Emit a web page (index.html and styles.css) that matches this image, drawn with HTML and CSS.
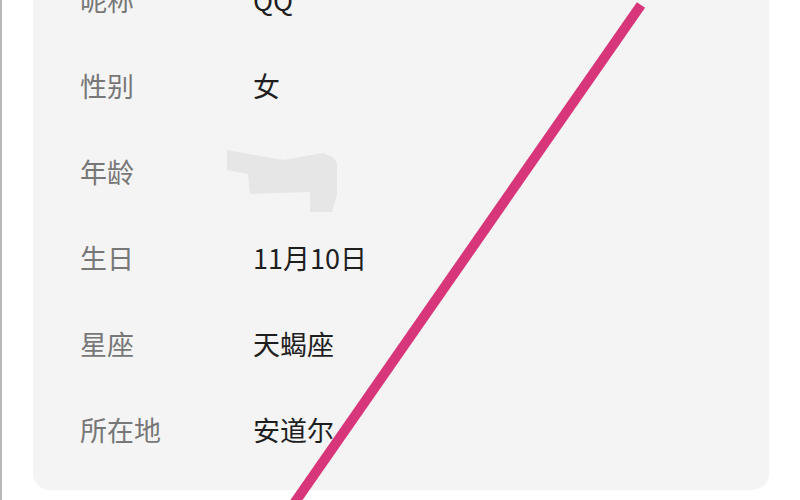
FILE: index.html
```html
<!DOCTYPE html>
<html lang="zh">
<head>
<meta charset="utf-8">
<link rel="stylesheet" href="styles.css">
</head>
<body>
<div class="page">
  <div class="card">
    <div class="row"><span class="label">昵称</span><span class="value">QQ</span></div>
    <div class="row"><span class="label">性别</span><span class="value">女</span></div>
    <div class="row"><span class="label">年龄</span><span class="value"></span></div>
    <div class="row"><span class="label">生日</span><span class="value">11月10日</span></div>
    <div class="row"><span class="label">星座</span><span class="value">天蝎座</span></div>
    <div class="row"><span class="label">所在地</span><span class="value">安道尔</span></div>
  </div>
  <svg class="overlay" width="800" height="500" viewBox="0 0 800 500">
    <polygon class="blob" points="227,150 283,160 323,153 333,157 337,163 337,195 332,212 310,212 310,192 250,194 248,174 227,170"/>
    <line class="strike" x1="641" y1="5" x2="293" y2="505"/>
  </svg>
</div>
</body>
</html>
```
FILE: styles.css
```css
html, body {
  margin: 0;
  padding: 0;
  background: #ffffff;
  overflow: hidden;
}
.page {
  position: relative;
  display: flow-root;
  width: 800px;
  height: 500px;
  box-sizing: border-box;
  box-shadow: inset 2px 0 0 #b8b8b8;
  padding-left: 33px;
  padding-right: 31px;
  font-family: "Noto Sans CJK SC", "Noto Sans", sans-serif;
}
.card {
  margin-top: -44px;
  background: #f4f4f4;
  border-radius: 0 0 16px 16px;
  padding-bottom: 18px;
}
.row {
  display: flex;
  align-items: center;
  height: 86px;
  padding-left: 47px;
  font-size: 27px;
}
.label {
  width: 173px;
  color: #777777;
}
.value {
  color: #1e1e1e;
}
.overlay {
  position: absolute;
  left: 0;
  top: 0;
}
.blob {
  fill: #e6e6e6;
}
.strike {
  stroke: #d8367a;
  stroke-width: 10;
  stroke-linecap: butt;
}
```
